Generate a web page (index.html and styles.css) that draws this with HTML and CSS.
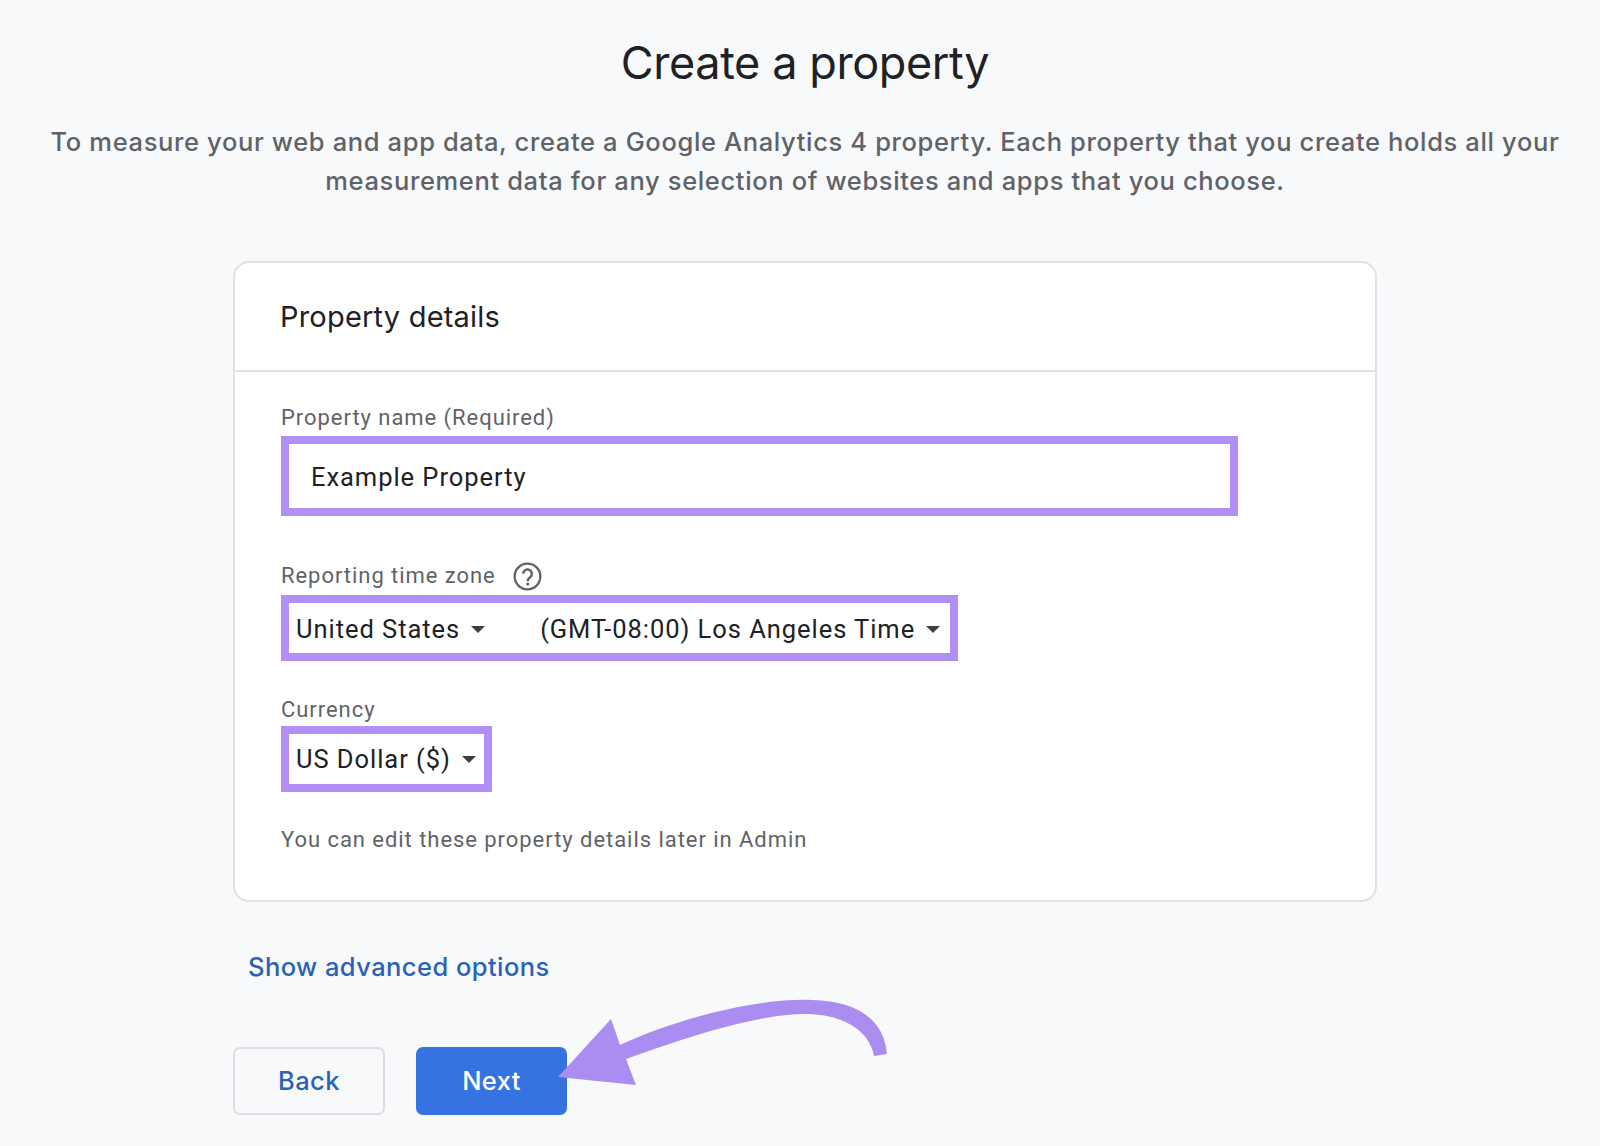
FILE: index.html
```html
<!DOCTYPE html>
<html lang="en">
<head>
<meta charset="utf-8">
<title>Create a property</title>
<link rel="stylesheet" href="styles.css">
</head>
<body>
<main class="page">
  <h1 class="title">Create a property</h1>
  <p class="intro">To measure your web and app data, create a Google Analytics 4 property. Each property that you create holds all your<br>measurement data for any selection of websites and apps that you choose.</p>
  <section class="card">
    <h2 class="card-head">Property details</h2>
    <div class="card-body">
      <div class="label">Property name (Required)</div>
      <div class="box name-box">Example Property</div>
      <div class="label tz-label">Reporting time zone
        <svg class="help" viewBox="0 0 28 28" aria-hidden="true"><circle cx="14" cy="14" r="12.4" fill="none" stroke="#5f6368" stroke-width="2.2"/><path d="M9.8 11.4a4.2 4.2 0 1 1 6.9 3.2c-1.5 1.2-2.5 1.9-2.5 3.9" fill="none" stroke="#5f6368" stroke-width="2.3"/><circle cx="14.2" cy="21.3" r="1.5" fill="#5f6368"/></svg>
      </div>
      <div class="box select-box tz-box">
        <span class="sel">United States<i class="caret"></i></span>
        <span class="sel tz">(GMT-08:00) Los Angeles Time<i class="caret"></i></span>
      </div>
      <div class="label cur-label">Currency</div>
      <div class="box select-box cur-box"><span class="sel">US Dollar ($)<i class="caret"></i></span></div>
      <p class="hint">You can edit these property details later in Admin</p>
    </div>
  </section>
  <a class="advanced" href="#">Show advanced options</a>
  <div class="actions">
    <button class="btn back">Back</button>
    <button class="btn next">Next</button>
  </div>
  <svg class="arrow" viewBox="0 0 1600 1146" aria-hidden="true"><path d="M558 1077 L611 1019 L620 1045 C680 1017 760 998 812 1000 C858 1001 884 1020 887 1054 L874 1056 C870 1032 845 1015 809 1014 C760 1013 690 1036 626 1059 L636 1085 Z" fill="#ab8df2"/></svg>
</main>
</body>
</html>
```

FILE: styles.css
```css
* { box-sizing: border-box; }
html, body { margin: 0; height: 100%; }
body { background: #f8f9fb; overflow: hidden; }
.page { position: relative; width: 1600px; height: 1146px; padding: 32px 0 0 233px; font-family: Roboto, sans-serif; }
.title { margin: 0 0 0 -233px; width: 1610px; text-align: center; font: 400 45px/62px Inter, sans-serif; letter-spacing: -0.4px; color: #202124; }
.intro { margin: 29px 0 0 -233px; width: 1610px; text-align: center; font: 500 25.5px/38.5px Inter, sans-serif; letter-spacing: .64px; color: #5f6368; }
.card { margin-top: 61px; width: 1144px; height: 641px; background: #fff; border: 2px solid #dfe1e5; border-radius: 16px; }
.card-head { margin: 0; height: 109px; padding: 0 0 0 45px; border-bottom: 2px solid #dfe1e5; font: 400 29px/108px Inter, sans-serif; letter-spacing: .2px; color: #202124; }
.card-body { padding: 33px 0 0 46px; }
.label { font-size: 22px; line-height: 26px; letter-spacing: .95px; color: #5f6368; display: flex; align-items: center; }
.box { background: #fff; border: 8px solid #b18ff7; color: #202124; font-size: 25.5px; letter-spacing: .95px; }
.name-box { margin-top: 5px; width: 957px; height: 80px; padding: 0 0 0 22px; line-height: 66px; }
.tz-label { margin-top: 44px; height: 32px; }
.help { width: 29px; height: 29px; margin-left: 17px; }
.select-box { display: flex; align-items: center; height: 66px; padding-left: 7px; margin-top: 3px; }
.tz-box { width: 677px; padding-top: 2px; }
.sel { display: inline-flex; align-items: center; }
.tz { margin-left: 55px; }
.caret { width: 0; height: 0; margin-left: 11px; border-left: 7px solid transparent; border-right: 7px solid transparent; border-top: 7px solid #3c4043; }
.cur-label { margin-top: 36px; }
.cur-box { width: 211px; margin-top: 3px; }
.hint { margin: 34px 0 0; font-size: 22px; line-height: 28px; letter-spacing: .95px; color: #5f6368; }
.advanced { display: block; margin: 46px 0 0 15px; font: 500 25.5px/38px Inter, sans-serif; letter-spacing: .44px; color: #2b62b5; text-decoration: none; }
.actions { display: flex; gap: 31px; margin-top: 61px; }
.btn { height: 68px; border-radius: 7px; font: 500 25.5px/1 Inter, sans-serif; letter-spacing: .4px; }
.back { width: 152px; background: #f8f9fb; border: 2px solid #dcdee2; color: #2b62b5; }
.next { width: 151px; background: #3573e0; border: 0; color: #fff; }
.arrow { position: absolute; left: 0; top: 0; width: 1600px; height: 1146px; pointer-events: none; }
```
